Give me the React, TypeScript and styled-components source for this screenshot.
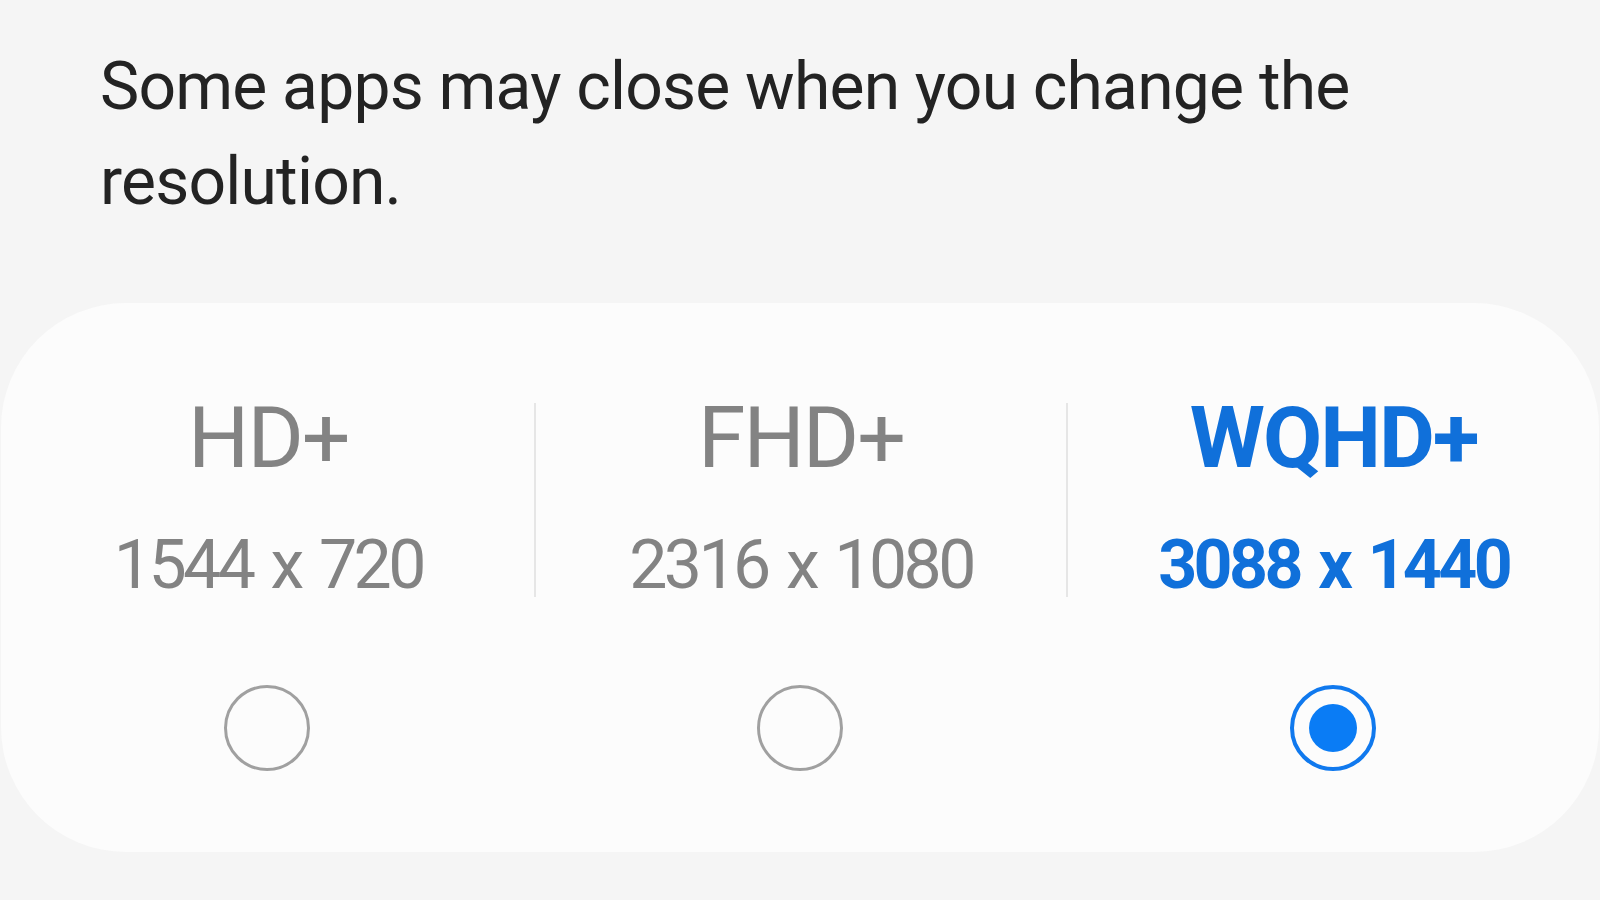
import React, { useState } from "react";
import styled, { createGlobalStyle } from "styled-components";

const Global = createGlobalStyle`
  html, body {
    margin: 0;
    padding: 0;
    background: #f5f5f5;
    font-family: Roboto, "Noto Sans", Arial, sans-serif;
  }
`;

const Page = styled.div`
  width: 1600px;
  height: 900px;
  box-sizing: border-box;
  padding-top: 39px;
  display: flex;
  flex-direction: column;
  overflow: hidden;
`;

const Notice = styled.p`
  margin: 0;
  padding: 0 200px 0 100px;
  font-size: 66px;
  line-height: 95px;
  color: #232323;
  font-weight: 400;
  letter-spacing: -0.8px;
`;

const Card = styled.div`
  margin: 74px 1px 0;
  background: #fcfcfc;
  border-radius: 125px;
  padding: 100px 0 81px;
  display: grid;
  grid-template-columns: repeat(3, 1fr);
`;

const Option = styled.label`
  display: flex;
  flex-direction: column;
  align-items: center;
  cursor: pointer;
`;

const Labels = styled.div<{ $divider: boolean }>`
  align-self: stretch;
  display: flex;
  flex-direction: column;
  align-items: center;
  border-left: 2px solid ${(p) => (p.$divider ? "#e6e6e6" : "transparent")};
  height: 194px;
  gap: 57px;
`;

const Title = styled.div<{ $active: boolean }>`
  font-size: 86px;
  line-height: 70px;
  font-weight: ${(p) => (p.$active ? 700 : 400)};
  color: ${(p) => (p.$active ? "#1070da" : "#838383")};
  letter-spacing: -2px;
`;

const Sub = styled.div<{ $active: boolean }>`
  font-size: 68px;
  line-height: 70px;
  font-weight: ${(p) => (p.$active ? 700 : 400)};
  color: ${(p) => (p.$active ? "#1070da" : "#838383")};
  letter-spacing: -3.6px;
  word-spacing: 5px;
`;

const Radio = styled.span<{ $active: boolean }>`
  margin-top: 88px;
  width: 86px;
  height: 86px;
  box-sizing: border-box;
  border-radius: 50%;
  border: ${(p) => (p.$active ? "4px solid #1079ee" : "3px solid #a0a0a0")};
  display: flex;
  align-items: center;
  justify-content: center;
`;

const Dot = styled.span`
  width: 48px;
  height: 48px;
  border-radius: 50%;
  background: #0a7cf5;
`;

const options = [
  { name: "HD+", res: "1544 x 720" },
  { name: "FHD+", res: "2316 x 1080" },
  { name: "WQHD+", res: "3088 x 1440" },
];

export default function App() {
  const [sel, setSel] = useState(2);
  return (
    <>
      <Global />
      <Page>
        <Notice>Some apps may close when you change the resolution.</Notice>
        <Card>
          {options.map((o, i) => (
            <Option key={o.name} onClick={() => setSel(i)}>
              <Labels $divider={i > 0}>
                <Title $active={sel === i}>{o.name}</Title>
                <Sub $active={sel === i}>{o.res}</Sub>
              </Labels>
              <Radio $active={sel === i}>{sel === i && <Dot />}</Radio>
            </Option>
          ))}
        </Card>
      </Page>
    </>
  );
}
